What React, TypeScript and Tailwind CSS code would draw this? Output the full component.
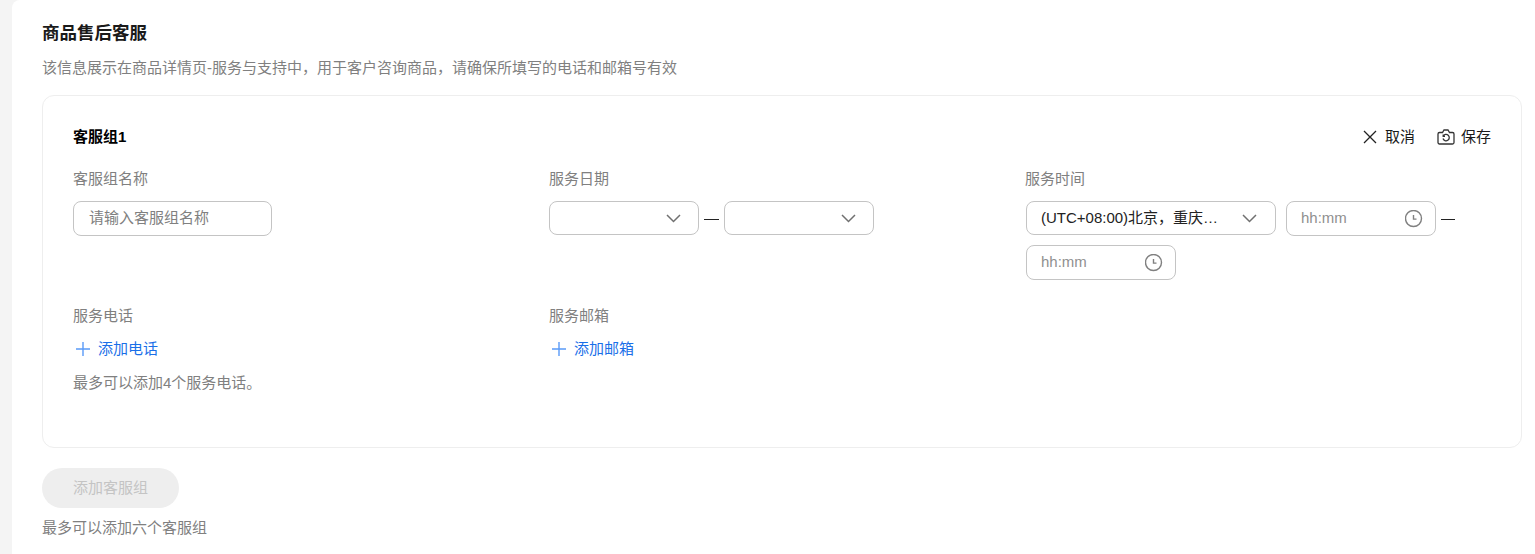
import React from "react";

const Chevron = () => (
  <svg width="16" height="16" viewBox="0 0 16 16" fill="none" stroke="#707070" strokeWidth="1.5" className="shrink-0">
    <path d="M1 5l6.5 6.5L14 5" />
  </svg>
);

const Clock = () => (
  <svg width="18" height="18" viewBox="0 0 18 18" fill="none" stroke="#808080" className="shrink-0">
    <circle cx="8.5" cy="8.5" r="8" strokeWidth="1.4" />
    <path d="M8.5 5V9.1H11.5" strokeWidth="1.4" />
  </svg>
);

const Plus = () => (
  <svg width="14" height="14" viewBox="0 0 14 14" fill="none" stroke="#5a9bf8" strokeWidth="1.4" className="shrink-0">
    <path d="M7 0V14M0 7H14" />
  </svg>
);

const Label = ({ children }: { children: React.ReactNode }) => (
  <div className="h-5 text-[15px] leading-5 text-[#808080]">{children}</div>
);

const DateSelect = () => (
  <div className="flex h-[34px] w-[150px] items-center justify-end rounded-lg border border-[#c4c4c4] pr-[16px]">
    <Chevron />
  </div>
);

const TimeInput = () => (
  <div className="flex h-[35px] w-[150px] items-center justify-between rounded-lg border border-[#c4c4c4] pl-[14px] pr-[12px] text-[15px] text-[#8f8f8f]">
    <span>hh:mm</span>
    <Clock />
  </div>
);

const AddLink = ({ children }: { children: React.ReactNode }) => (
  <div className="flex h-5 items-center pl-[3px] text-[15px] text-[#1a6fe8]">
    <Plus />
    <span className="ml-[8px]">{children}</span>
  </div>
);

export default function App() {
  return (
    <div
      className="flex h-[554px] w-full overflow-hidden bg-[#f4f4f4] text-black"
      style={{ fontFamily: '"Liberation Sans", "Noto Sans CJK SC", sans-serif' }}
    >
      <main className="ml-3 h-full flex-1 rounded-tl-lg bg-white pl-[30px] pr-[13px] pt-[21px]">
        <h1 className="h-6 text-[17.5px] font-bold leading-6 text-[#1a1a1a]">商品售后客服</h1>
        <p className="mt-[13px] h-5 text-[15px] leading-5 text-[#808080]">
          该信息展示在商品详情页-服务与支持中，用于客户咨询商品，请确保所填写的电话和邮箱号有效
        </p>
        <section className="mt-[17px] h-[353px] rounded-xl border border-[#eeeeee] pl-[30px] pr-[30px] pt-[31px]">
          <div className="flex h-5 items-center justify-between text-[15px]">
            <span className="font-bold">客服组1</span>
            <div className="flex items-center text-[#1a1a1a]">
              <svg width="14" height="14" viewBox="0 0 14 14" fill="none" stroke="#222" strokeWidth="1.3">
                <path d="M1 1L13 13M13 1L1 13" />
              </svg>
              <span className="ml-[8px]">取消</span>
              <svg className="ml-[22px]" width="18" height="16" viewBox="0 0 18 16" fill="none" stroke="#333" strokeWidth="1.3">
                <path d="M2.5 3.5H5.5L7 1H11L12.5 3.5H15.5A1.5 1.5 0 0 1 17 5V13.5A1.5 1.5 0 0 1 15.5 15H2.5A1.5 1.5 0 0 1 1 13.5V5A1.5 1.5 0 0 1 2.5 3.5Z" />
                <path d="M6.2 7.2A3.2 3.2 0 1 1 6 9.5M6.2 5.6V7.4H8" />
              </svg>
              <span className="ml-[6px]">保存</span>
            </div>
          </div>

          <div className="mt-[22px] grid grid-cols-[476px_476px_1fr]">
            <div>
              <Label>客服组名称</Label>
              <div className="mt-[12px] flex h-[35px] w-[199px] items-center rounded-lg border border-[#c4c4c4] pl-[15px] text-[15px] text-[#808080]">
                请输入客服组名称
              </div>
            </div>
            <div>
              <Label>服务日期</Label>
              <div className="mt-[12px] flex items-start">
                <DateSelect />
                <span className="mt-[18px] ml-[5px] h-px w-[15px] bg-[#222]" />
                <span className="ml-[5px]">
                  <DateSelect />
                </span>
              </div>
            </div>
            <div className="pl-px">
              <div className="-ml-px">
                <Label>服务时间</Label>
              </div>
              <div className="mt-[12px] flex flex-wrap items-start gap-y-[9px]">
                <div className="flex h-[34px] w-[250px] items-center justify-between rounded-lg border border-[#c4c4c4] pl-[14px] pr-[17px] text-[15px] text-[#222]">
                  <span>(UTC+08:00)北京，重庆…</span>
                  <Chevron />
                </div>
                <span className="ml-[10px]">
                  <TimeInput />
                </span>
                <span className="mt-[18px] ml-[5px] h-px w-[14px] bg-[#222]" />
                <div className="basis-full">
                  <TimeInput />
                </div>
              </div>
            </div>
          </div>

          <div className="mt-[26px] grid grid-cols-[476px_476px_1fr]">
            <div>
              <Label>服务电话</Label>
              <div className="mt-[13px]">
                <AddLink>添加电话</AddLink>
              </div>
              <p className="mt-[14px] h-5 text-[15px] leading-5 text-[#808080]">最多可以添加4个服务电话。</p>
            </div>
            <div>
              <Label>服务邮箱</Label>
              <div className="mt-[13px]">
                <AddLink>添加邮箱</AddLink>
              </div>
            </div>
          </div>
        </section>
        <button className="mt-5 flex h-10 w-[137px] items-center justify-center rounded-full bg-[#eeeeee] text-[15px] text-[#c4c4c4]">
          添加客服组
        </button>
        <p className="mt-[10px] h-5 text-[15px] leading-5 text-[#808080]">最多可以添加六个客服组</p>
      </main>
    </div>
  );
}
